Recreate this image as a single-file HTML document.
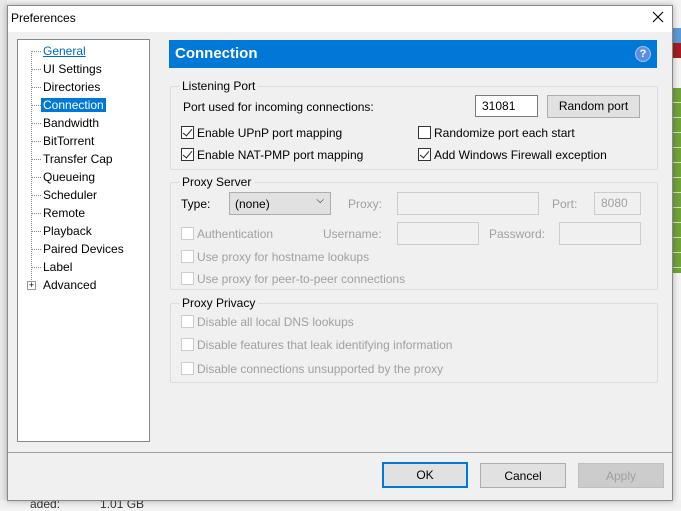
<!DOCTYPE html>
<html><head><style>
*{margin:0;padding:0;box-sizing:border-box}
body{width:681px;height:508px;position:relative;overflow:hidden;background:#f3f3f3;font:12px "Liberation Sans",sans-serif;color:#000}
.a{position:absolute;white-space:nowrap}
.cb{position:absolute;width:13px;height:13px;border:1px solid #333;background:#fff}
.cb.d{border-color:#ccc}
.cb.c::after{content:"";position:absolute;left:3px;top:0px;width:4px;height:8px;border:solid #222;border-width:0 1.5px 1.5px 0;transform:rotate(40deg)}
.g{color:#a0a0a0}
.grp{position:absolute;border:1px solid #dcdcdc;border-radius:2px}
.gt{position:absolute;background:#f0f0f0;padding:0 3px;top:-8px;left:8px}
.in{position:absolute;border:1px solid #ccc;background:#f0f0f0}
.btn{position:absolute;border:1px solid #adadad;background:#e1e1e1;text-align:center;line-height:24px}
.tree div{position:absolute;left:25px}
.dot{position:absolute;left:13px;width:10px;border-top:1px dotted #888}
</style></head><body>
<div class="a" style="left:0;top:0;width:7px;height:508px;background:#e8e8e8"></div>
<div class="a" style="left:673px;top:28px;width:8px;height:15px;background:#5b9bd5"></div>
<div class="a" style="left:673px;top:43px;width:8px;height:15px;background:#a02020"></div>
<div class="a" style="left:673px;top:88px;width:8px;height:185px;background:repeating-linear-gradient(#6fa33c 0 14px,#cfe3b8 14px 15px)"></div>
<div class="a" style="left:0;top:500px;width:681px;height:8px;background:#f0f0f0"></div>
<div class="a" style="left:30px;top:497px;color:#333">aded: &nbsp;&nbsp;&nbsp;&nbsp;&nbsp;&nbsp;&nbsp;&nbsp;&nbsp;&nbsp;&nbsp;1.01 GB</div>
<div class="a" style="left:7px;top:5px;width:666px;height:496px;background:#f0f0f0;border:1px solid #888;box-shadow:0 0 6px rgba(0,0,0,.3)"></div>
<div class="a" style="left:8px;top:6px;width:664px;height:26px;background:#fff"></div>
<div class="a" style="left:11px;top:11px;font-size:12px">Preferences</div>
<svg class="a" style="left:652px;top:11px" width="12" height="12"><path d="M1 1L11 11M11 1L1 11" stroke="#000" stroke-width="1.1"/></svg>
<div class="a tree" style="left:17px;top:39px;width:133px;height:403px;background:#fff;border:1px solid #828790">
<div style="top:4px;color:#0066cc;text-decoration:underline">General</div>
<div style="top:22px">UI Settings</div>
<div style="top:40px">Directories</div>
<div style="top:58px;left:23px;background:#0078d7;color:#fff;padding:0 2px">Connection</div>
<div style="top:76px">Bandwidth</div>
<div style="top:94px">BitTorrent</div>
<div style="top:112px">Transfer Cap</div>
<div style="top:130px">Queueing</div>
<div style="top:148px">Scheduler</div>
<div style="top:166px">Remote</div>
<div style="top:184px">Playback</div>
<div style="top:202px">Paired Devices</div>
<div style="top:220px">Label</div>
<div style="top:238px">Advanced</div>
<span class="dot" style="top:11px"></span><span class="dot" style="top:29px"></span><span class="dot" style="top:47px"></span><span class="dot" style="top:65px"></span><span class="dot" style="top:83px"></span><span class="dot" style="top:101px"></span><span class="dot" style="top:119px"></span><span class="dot" style="top:137px"></span><span class="dot" style="top:155px"></span><span class="dot" style="top:173px"></span><span class="dot" style="top:191px"></span><span class="dot" style="top:209px"></span><span class="dot" style="top:227px"></span>
<span class="a" style="left:13px;top:11px;height:235px;border-left:1px dotted #888"></span>
<span class="a" style="left:9px;top:241px;width:9px;height:9px;border:1px solid #999;background:#fff;font-size:9px;line-height:7px;text-align:center">+</span>
</div>
<div class="a" style="left:169px;top:40px;width:488px;height:28px;background:#0078d7"></div>
<div class="a" style="left:175px;top:45px;color:#fff;font-weight:bold;font-size:15px">Connection</div>
<div class="a" style="left:635px;top:46px;width:16px;height:16px;border-radius:50%;background:#5a8fe0;color:#fff;font-weight:bold;font-size:11px;text-align:center;line-height:15px;border:1px solid #a8c4f0">?</div>
<div class="grp" style="left:170px;top:86px;width:488px;height:84px"><span class="gt">Listening Port</span></div>
<div class="a" style="left:183px;top:100px">Port used for incoming connections:</div>
<div class="a" style="left:475px;top:95px;width:63px;height:22px;border:1px solid #7a7a7a;background:#fff;padding:3px 0 0 6px">31081</div>
<div class="btn" style="left:547px;top:95px;width:93px;height:23px;line-height:21px">Random port</div>
<span class="cb c" style="left:181px;top:126px"></span><div class="a" style="left:197px;top:126px">Enable UPnP port mapping</div>
<span class="cb c" style="left:181px;top:148px"></span><div class="a" style="left:197px;top:148px">Enable NAT-PMP port mapping</div>
<span class="cb" style="left:418px;top:126px"></span><div class="a" style="left:434px;top:126px">Randomize port each start</div>
<span class="cb c" style="left:418px;top:148px"></span><div class="a" style="left:434px;top:148px">Add Windows Firewall exception</div>
<div class="grp" style="left:170px;top:182px;width:488px;height:108px"><span class="gt">Proxy Server</span></div>
<div class="a" style="left:181px;top:197px">Type:</div>
<div class="a" style="left:229px;top:192px;width:102px;height:23px;border:1px solid #adadad;background:#e1e1e1;padding:4px 0 0 5px">(none)<span style="position:absolute;right:6px;top:2px;font-size:10px">⌵</span></div>
<div class="a g" style="left:348px;top:197px">Proxy:</div>
<div class="in" style="left:397px;top:192px;width:142px;height:23px"></div>
<div class="a g" style="left:552px;top:197px">Port:</div>
<div class="in g" style="left:594px;top:192px;width:47px;height:23px;padding:3px 0 0 6px">8080</div>
<span class="cb d" style="left:181px;top:227px"></span><div class="a g" style="left:197px;top:227px">Authentication</div>
<div class="a g" style="left:323px;top:227px">Username:</div>
<div class="in" style="left:397px;top:222px;width:82px;height:23px"></div>
<div class="a g" style="left:489px;top:227px">Password:</div>
<div class="in" style="left:559px;top:222px;width:82px;height:23px"></div>
<span class="cb d" style="left:181px;top:250px"></span><div class="a g" style="left:197px;top:250px">Use proxy for hostname lookups</div>
<span class="cb d" style="left:181px;top:272px"></span><div class="a g" style="left:197px;top:272px">Use proxy for peer-to-peer connections</div>
<div class="grp" style="left:170px;top:303px;width:488px;height:80px"><span class="gt">Proxy Privacy</span></div>
<span class="cb d" style="left:181px;top:315px"></span><div class="a g" style="left:197px;top:315px">Disable all local DNS lookups</div>
<span class="cb d" style="left:181px;top:338px"></span><div class="a g" style="left:197px;top:338px">Disable features that leak identifying information</div>
<span class="cb d" style="left:181px;top:362px"></span><div class="a g" style="left:197px;top:362px">Disable connections unsupported by the proxy</div>
<div class="a" style="left:8px;top:452px;width:664px;border-top:1px solid #a0a0a0"></div>
<div class="btn" style="left:382px;top:462px;width:86px;height:26px;border:2px solid #0078d7;line-height:22px">OK</div>
<div class="btn" style="left:480px;top:463px;width:86px;height:25px">Cancel</div>
<div class="btn" style="left:578px;top:463px;width:86px;height:25px;border-color:#bfbfbf;background:#cccccc;color:#a0a0a0">Apply</div>
</body></html>
